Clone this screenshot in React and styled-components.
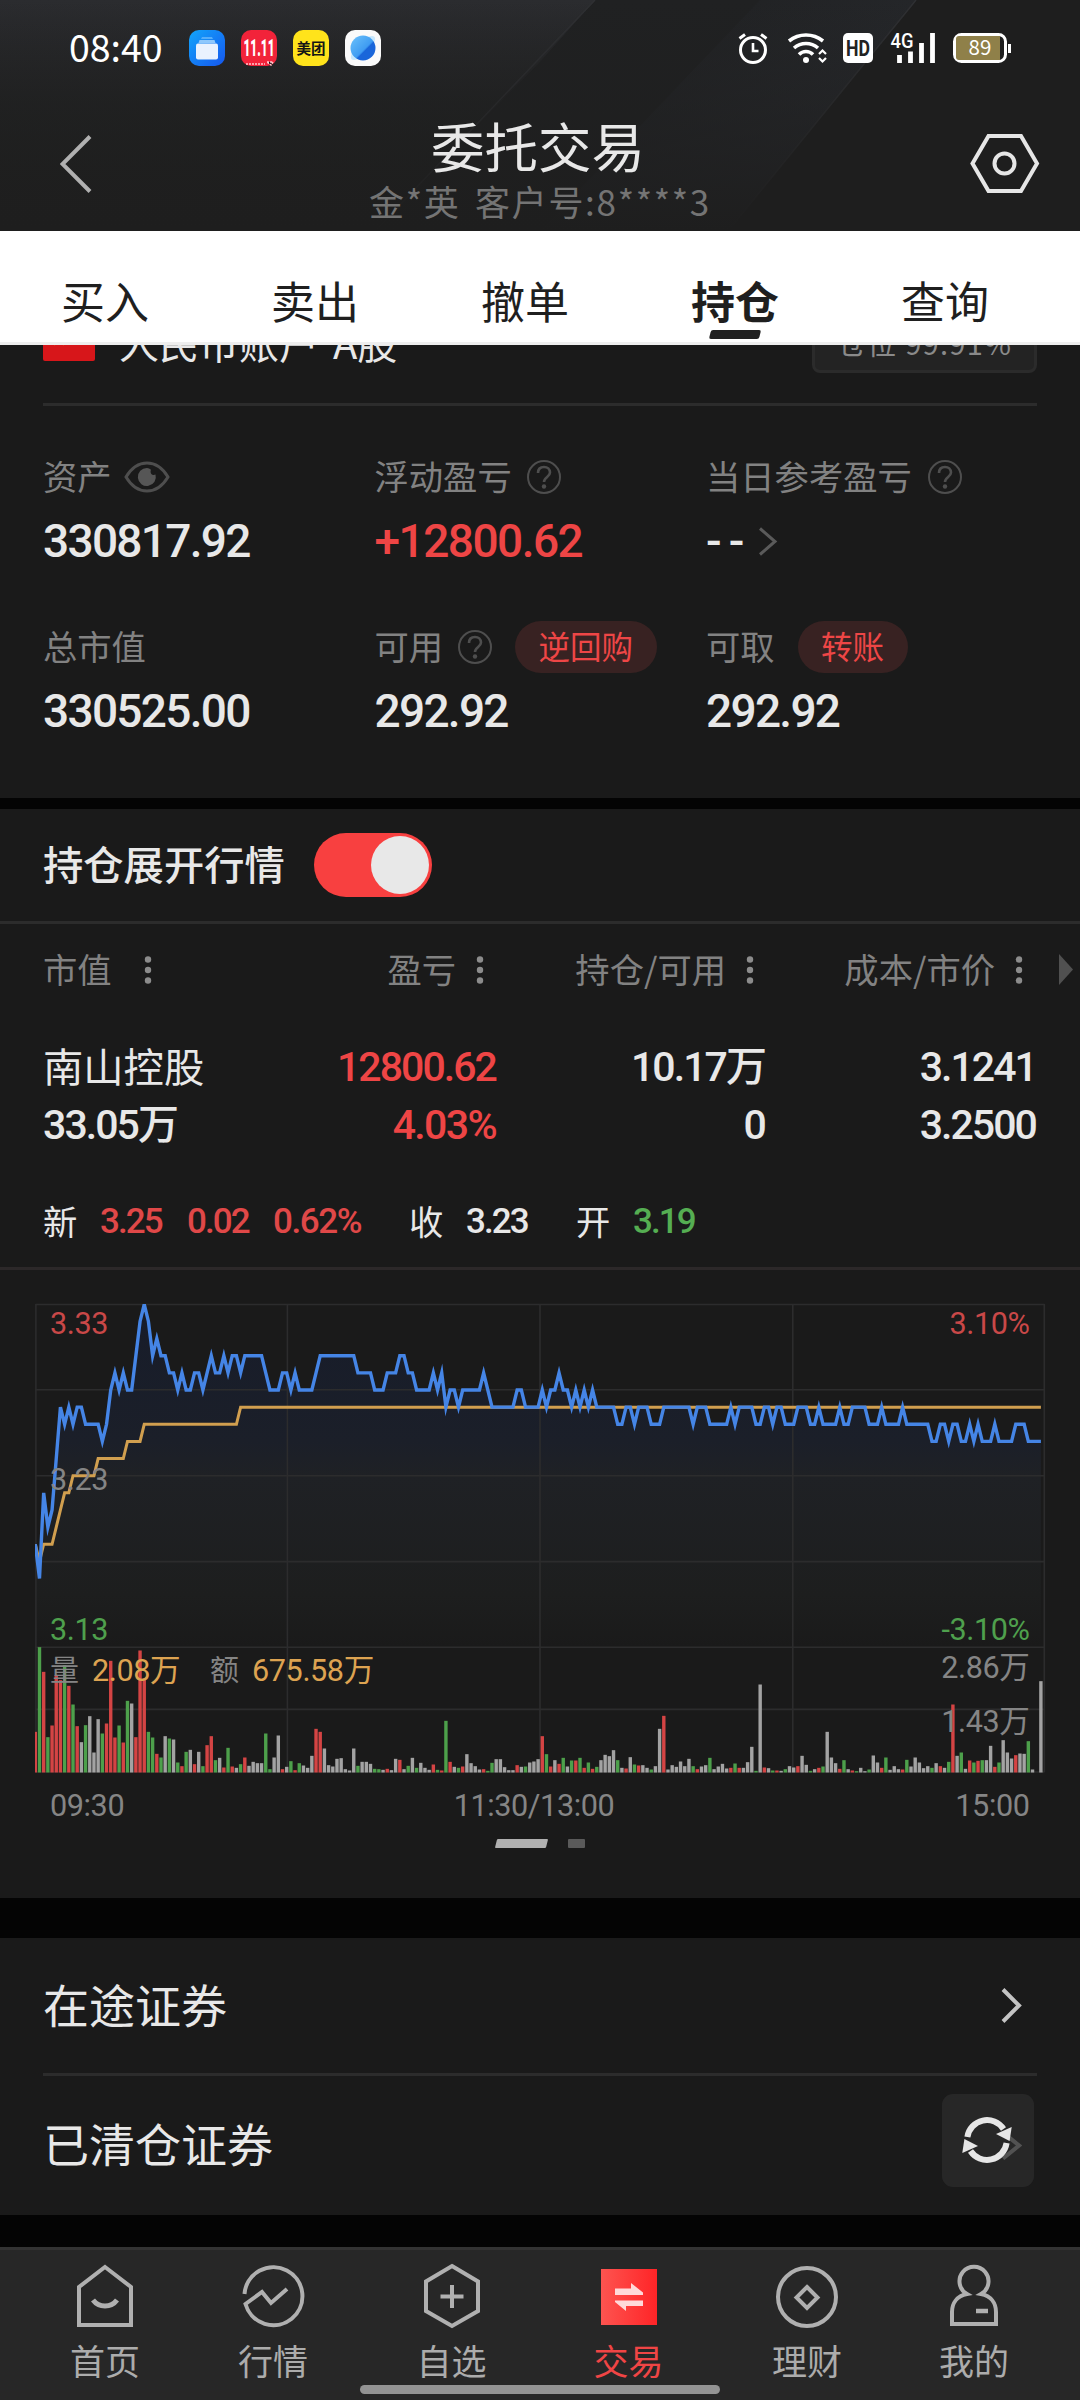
import React from 'react'
import styled, { createGlobalStyle } from 'styled-components'

const GlobalStyle = createGlobalStyle`
* {
box-sizing: border-box;
}
body {
margin: 0;
background: #040404;
color: #e8e8e8;
font-family: "Noto Sans CJK SC", "Noto Sans", sans-serif;
}
svg {
display: block;
flex: none;
}
`
const Page = styled.div`
width: 1080px;
height: 2400px;
overflow: hidden;
display: flex;
flex-direction: column;
background: #040404;
`

/* ---- header ---- */
const Header = styled.header`
position: relative;
height: 231px;
flex: none;
background: linear-gradient(180deg, #2b2c2f 0%, #222324 45%, #1f1f1f 100%);
`
const HeaderArt = styled.svg`
position: absolute;
left: 0;
top: 0;
`
const StatusBar = styled.div`
position: relative;
height: 96px;
padding: 0 69px;
display: flex;
align-items: center;
`
const Clock = styled.span`
width: 120px;
font-size: 37.5px;
line-height: 60px;
margin-top: -5px;
font-weight: 400;
color: #fff;
`
const AppIcons = styled.div`
display: flex;
gap: 16px;
`
const StatusIcons = styled.div`
margin-left: auto;
display: flex;
align-items: center;
`
const TitleBar = styled.div`
position: relative;
height: 135px;
display: flex;
justify-content: space-between;
padding: 0 40px 0 60px;
`
const SideButton = styled.div`
width: 70px;
display: flex;
align-items: center;
`
const TitleBlock = styled.div`
display: flex;
flex-direction: column;
align-items: center;
padding: 19px 20px 0 0;
`
const Title = styled.div`
font-size: 53.5px;
line-height: 60px;
padding-right: 4px;
color: #e8e8e8;
`
const SubTitle = styled.div`
font-size: 35px;
line-height: 40px;
margin-top: 6px;
letter-spacing: 1.7px;
word-spacing: 5px;
color: #747474;
`
const Tabs = styled.nav`
flex: none;
height: 114px;
background: #fff;
border-bottom: 3px solid #eeeeee;
display: grid;
grid-template-columns: repeat(5, 210px);
`
const Tab = styled.div`
display: flex;
flex-direction: column;
align-items: center;
padding-top: 44px;
font-size: 44px;
line-height: 50px;
font-weight: ${p => p.$active ? 600 : 400};
color: #1f1f1f;
&::after {
content: '';
margin-top: 5px;
width: 50px;
height: 9px;
transform: skewX(-14deg);
border-radius: 2px;
background: ${p => p.$active ? '#1f1f1f' : 'transparent'};
}
`

/* ---- account summary ---- */
const Section = styled.section`
flex: none;
overflow: hidden;
background: #1a1a1a;
`
const AccountRow = styled.div`
margin: -31px 43px 0;
height: 92px;
padding-bottom: 31px;
border-bottom: 3px solid #2c2c2c;
display: flex;
align-items: center;
`
const AccountName = styled.span`
font-size: 40px;
line-height: 50px;
word-spacing: 5px;
margin: -3px 0 0 24px;
`
const Badge = styled.span`
margin-left: auto;
width: 225px;
height: 59px;
border: 3px solid #2b2b2b;
border-radius: 8px;
background: #232323;
display: flex;
justify-content: center;
font-size: 29px;
line-height: 50px;
letter-spacing: 1.3px;
color: #8a8a8a;
`
const Summary = styled.div`
height: 392px;
padding: 40px 43px 0;
display: grid;
grid-template-columns: 331.5px 331.5px 1fr;
grid-template-rows: 170px 170px;
`
const Label = styled.div`
height: 62px;
display: flex;
align-items: center;
font-size: 34.3px;
color: #828282;
`
const LabelText = styled.span`
line-height: 40px;
margin: -4px ${p => p.$gap || 0}px 0 0;
`
const Num = styled.span`
font-family: Roboto, "Noto Sans CJK SC", sans-serif;
font-weight: 500;
font-size: ${p => p.$size || 46}px;
letter-spacing: ${p => p.$spacing || '-0.037em'};
line-height: 50px;
color: ${p => p.$color || '#e8e8e8'};
`
const Value = styled.div`
height: 50px;
margin-top: 8px;
display: flex;
align-items: center;
gap: 7px;
`
const Pill = styled.span`
margin-left: 23px;
height: 52px;
padding: 0 23.5px;
border-radius: 26px;
background: #382222;
color: #ee4646;
font-size: 31.5px;
line-height: 48px;
`
const Gap = styled.div`
flex: none;
height: ${p => p.$h}px;
`

/* ---- positions ---- */
const ToggleRow = styled.div`
height: 115px;
padding-left: 43px;
border-bottom: 3px solid #2c2c2c;
display: flex;
align-items: center;
font-size: 40.3px;
font-weight: 500;
`
const ToggleLabel = styled.span`
line-height: 50px;
margin-top: -4px;
width: 271px;
`
const Toggle = styled.div`
width: 118px;
height: 64px;
padding: 3px;
border-radius: 32px;
background: #f84040;
display: flex;
justify-content: flex-end;
`
const Knob = styled.div`
width: 58px;
height: 58px;
border-radius: 50%;
background: #e8e8e8;
`
const HeadRow = styled.div`
height: 90px;
padding-top: 1px;
display: grid;
grid-template-columns: 278px 178px 270px 269px 1fr;
align-items: center;
`
const HeadCell = styled.div`
display: flex;
align-items: center;
justify-content: flex-end;
gap: 20px;
margin-right: -28px;
font-size: 34.3px;
line-height: 40px;
color: #828282;
white-space: nowrap;
&:first-child {
justify-content: flex-start;
padding-left: 43px;
gap: 32px;
}
&:last-child {
margin-right: 7px;
}
`
const HeadText = styled.span`
margin-top: -4px;
`
const StockRow = styled.div`
height: 151px;
padding: 28px 44px 0 43px;
display: grid;
grid-template-columns: 253px 200px 269px 271px;
grid-auto-rows: 58px;
`
const StockName = styled.span`
font-size: 40.3px;
line-height: 52px;
margin-top: -3px;
`
const Cell = styled.span`
text-align: ${p => p.$left ? 'left' : 'right'};
`
const QuoteRow = styled.div`
height: 105px;
padding: 11px 0 0 43px;
border-bottom: 3px solid #2c2829;
display: flex;
align-items: center;
`
const QuoteLabel = styled.span`
width: 57px;
font-size: 34.3px;
line-height: 40px;
margin-top: -3px;
`
const QuoteItem = styled.span`
width: ${p => p.$w}px;
`
const ChartArea = styled.div`
height: 569px;
padding-top: 10px;
`
const Pager = styled.div`
display: flex;
gap: 21px;
padding-left: 496px;
`
const PagerBar = styled.span`
width: ${p => p.$on ? 51 : 17}px;
height: 9px;
border-radius: 1px;
background: ${p => p.$on ? '#b0b0b0' : '#5a5a5a'};
transform: ${p => p.$on ? 'skewX(-14deg)' : 'none'};
`

/* ---- bottom lists ---- */
const ListRow = styled.div`
position: relative;
height: ${p => p.$h}px;
margin: 0 43px;
padding-right: 15px;
border-bottom: ${p => p.$line ? '3px solid #2c2c2c' : 'none'};
display: flex;
align-items: center;
justify-content: space-between;
font-size: 46px;
`
const ListText = styled.span`
line-height: 60px;
margin-top: ${p => p.$up || -6}px;
`
const RefreshButton = styled.div`
position: absolute;
right: 3px;
top: 18px;
width: 92px;
height: 93px;
border-radius: 11px;
background: rgba(44, 44, 44, 0.72);
`
const BottomNav = styled.nav`
flex: none;
height: 153px;
padding: 0 36px 0 20px;
border-top: 3px solid #333;
background: #272727;
display: grid;
grid-template-columns: 170px 166px 191px 163px 194px 140px;
`
const NavItem = styled.div`
padding-top: 13px;
display: flex;
flex-direction: column;
align-items: center;
font-size: 35px;
line-height: 40px;
color: ${p => p.$active ? '#f04545' : '#acacac'};
`
const NavText = styled.span`
margin-top: 11px;
`
const HomeBar = styled.div`
position: absolute;
left: 360px;
top: 2385px;
width: 360px;
height: 9px;
border-radius: 5px;
background: #939393;
`

const RED = '#ee4545'
const GREEN = '#55ae52'

// price in cents above 3.00, one value per minute, "v*n" repeats a value
const PRICE = '19 17 22 20 21 24 27 26 27 26 27*2 26*4 25 26 28 29 28 29 28*2 30 32 33 32 30 31 30*2 29*2 28 29 28*2 29*2 28 29 30 29*2 30 29 30*2 29 30*5 29 28*3 29*2 28 29 28*4 29 30*9 29*4 28*3 29*3 30*2 29*2 28*4 29 28 29 27 28*2 27 28*5 29 28 27*6 28*2 27*4 28 27 28*2 29 28*2 27 28 27 28 27 28 27*5 26*2 27*2 26 27*3 26*3 27*7 26 27*3 26*5 27 26 27*4 26*2 27*2 26 27*2 26*3 27*3 26*2 27 26*4 27 26*2 27*4 26*3 27 26*4 27 26*6 25*2 26*2 25 26*2 25*2 26 25 26 25*3 26 25*4 26*3 25*4'
const AVERAGE = '19 18 19*3 20 21 22*2 23*6 24*7 25*4 26*23 27*192'

// r = up, g = down, w = flat
const VOLUME = 'r122 g376 r302 g106 r141 r292 r277 g322 r260 g204 r139 w91 g142 w169 w60 w160 g117 r147 r335 r105 g141 r90 g215 w207 r106 r366 r282 g122 g105 r56 g45 w109 g102 w99 g30 r19 g62 w68 r25 w62 g19 r82 r109 g37 w44 r15 g74 r18 w14 g25 r45 w20 w32 w28 w28 g117 g10 w45 w111 r10 w17 g34 r7 g28 w21 w14 w50 r131 r122 w72 w22 w18 w41 w43 w10 w6 w72 g20 w32 w32 w26 g11 g10 w8 r11 w7 w41 r38 w10 g20 w44 g14 w29 w14 w8 r24 g8 r6 g155 r32 w17 g14 r18 w55 w28 w19 w9 r10 g5 g29 w40 w40 w16 w7 w7 r22 w17 g18 w30 w33 w40 r109 g55 r18 w37 r26 g44 w18 g36 r36 g44 r14 g30 r11 g17 w37 w53 w49 w67 g37 w14 r12 w46 g24 r21 w22 w14 g9 w19 w131 r170 w9 w22 w17 w33 w19 w41 g19 r10 w18 w22 g44 w10 w18 w26 w12 r14 g27 r14 w14 w31 w77 g5 w264 r15 w13 g6 r6 w5 g10 w19 w15 r19 w50 w23 g5 w10 r14 g18 w122 w45 w28 r11 g37 w10 r6 g4 w14 w4 g9 w51 w30 r14 g45 w8 w19 w10 r9 g38 w18 w45 w30 w13 w19 g14 w28 r19 w14 g32 r204 w50 g60 w11 r36 g30 r35 g37 w37 w80 r17 g30 w97 w60 w42 r52 w57 w56 g94 w9 w0 w274'

const expand = s => s.split(' ').flatMap(t => {
  const [v, n] = t.split('*')
  return Array(Number(n || 1)).fill(Number(v))
})
const X0 = 35.3
const STEP = 4.19
const px = i => +(X0 + i * STEP).toFixed(2)
const py = v => +(24.3 + (33 - v) * 17.14).toFixed(2)
const toPoints = s => expand(s).map((v, i) => `${px(i)},${py(v)}`).join(' ')
const BAR_COLORS = { r: '#d44444', g: '#4da04b', w: '#a3a3a3' }

const Chart = () => {
  const line = toPoints(PRICE)
  return (
    <svg width="1080" height="559" viewBox="0 0 1080 559" fontFamily='Roboto, "Noto Sans CJK SC", sans-serif' fontSize="30.6" letterSpacing="-0.4">
      <defs>
        <linearGradient id="area" x1="0" y1="24" x2="0" y2="367" gradientUnits="userSpaceOnUse">
          <stop offset="0" stopColor="#171c2a" />
          <stop offset="0.4" stopColor="#1b1f29" />
          <stop offset="0.5" stopColor="#1f2125" />
          <stop offset="0.85" stopColor="#1d1e1e" />
          <stop offset="1" stopColor="#1a1a1a" />
        </linearGradient>
        <clipPath id="plot"><rect x="35" y="24" width="1010" height="470" /></clipPath>
      </defs>
      <polygon points={`${px(0)},367 ${line} ${px(240)},367`} fill="url(#area)" />
      <g stroke="#2c2c2d" strokeWidth="1.6">
        {[24.5, 109.8, 195.8, 281.6, 367.2, 429.4, 492].map(y => <path key={y} d={`M35.5 ${y}H1044.5`} />)}
        {[35.9, 287.4, 540, 792.8, 1044.3].map(x => <path key={x} d={`M${x} 24V492`} />)}
      </g>
      <g clipPath="url(#plot)" fill="none">
        {VOLUME.split(' ').map((b, i) => {
          const h = Number(b.slice(1)) / 3
          return <rect key={i} x={px(i) - 1.7} y={492.5 - h} width="3.4" height={h} fill={BAR_COLORS[b[0]]} />
        })}
        <polyline points={toPoints(AVERAGE)} stroke="#d19f4f" strokeWidth="3" />
        <polyline points={line} stroke="#4585e6" strokeWidth="3.4" strokeMiterlimit="6" />
      </g>
      <text x="50" y="53.5" fill="#c94848">3.33</text>
      <text x="50" y="209.5" fill="#858585">3.23</text>
      <text x="50" y="360" fill="#4fa04d">3.13</text>
      <g textAnchor="end">
        <text x="1029.5" y="53.5" fill="#c94848">3.10%</text>
        <text x="1029.5" y="360" fill="#4fa04d">-3.10%</text>
        <text x="1029.5" y="398" fill="#858585">2.86万</text>
        <text x="1029.5" y="451.5" fill="#858585">1.43万</text>
        <text x="1029.5" y="535.5" fill="#858585">15:00</text>
      </g>
      <text x="50" y="400.5" fill="#858585" fontSize="29">量</text>
      <text x="92" y="400.5" fill="#dda351">2.08万</text>
      <text x="210" y="400.5" fill="#858585" fontSize="29">额</text>
      <text x="252" y="400.5" fill="#dda351">675.58万</text>
      <text x="50" y="535.5" fill="#858585">09:30</text>
      <text x="534" y="535.5" fill="#858585" textAnchor="middle">11:30/13:00</text>
    </svg>
  )
}

const Question = () => (
  <svg width="34" height="34" viewBox="0 0 34 34" fill="none" stroke="#4e4e4e" strokeWidth="2">
    <circle cx="17" cy="17" r="16" />
    <path d="M11 13c0-4 2.6-6 6-6s6 2.200 6 5.600c0 4.400-6 4.400-6 9.400" strokeWidth="2.600" />
    <circle cx="17" cy="26.500" r="2.200" fill="#4e4e4e" stroke="none" />
  </svg>
)
const Eye = () => (
  <svg width="46" height="32" viewBox="0 0 46 32">
    <path d="M2 16C8 6 15 2 23 2s15 4 21 14c-6 10-13 14-21 14S8 26 2 16z" fill="none" stroke="#4e4e4e" strokeWidth="3" />
    <path d="M23 7a9 9 0 1 0 8.500 6.500c-3 1.500-6-1-4.500-4.800A9 9 0 0 0 23 7z" fill="#565656" />
  </svg>
)
const Dots = () => (
  <svg width="8" height="30" viewBox="0 0 8 30" fill="#8c8c8c">
    <circle cx="4" cy="4.500" r="3.200" />
    <circle cx="4" cy="15" r="3.200" />
    <circle cx="4" cy="25.500" r="3.200" />
  </svg>
)
const Chevron = ({ w, h, color, stroke }) => (
  <svg width={w} height={h} fill="none" stroke={color} strokeWidth={stroke}>
    <path d={`M2 1.500L${w - 3} ${h / 2}L2 ${h - 1.5}`} />
  </svg>
)

const navIcons = {
  首页: (
    <g>
      <path d="M32 4L58 24V62H6V24z" />
      <path d="M20 37c6 8 18 8 24 0" strokeWidth="5" />
    </g>
  ),
  行情: (
    <g>
      <path d="M3.500 31A29 29 0 1 1 4.500 41L21 29l9 11L46 26" />
    </g>
  ),
  自选: (
    <g>
      <path d="M32 3L58 18.500V48L32 63 6 48V18.500z" />
      <path d="M32 22v23M20.500 33.500h23" />
    </g>
  ),
  交易: (
    <g stroke="none">
      <rect x="4" y="6" width="56" height="56" fill="url(#trade)" />
      <path d="M18 25.500h16v-5.500l12 9.500v2.500H18zM46 37.500H18v1.500l11 9v-5h17z" fill="#ffd9d9" />
    </g>
  ),
  理财: (
    <g>
      <circle cx="32" cy="34" r="29" />
      <path d="M32 24l10.500 10.500L32 45 21.500 34.500z" />
    </g>
  ),
  我的: (
    <g>
      <path d="M25 31a14.500 14.500 0 1 1 14 0C49 33 54 40 54 49v12H10V49c0-9 5-16 15-18z" />
      <path d="M34 48h12" strokeWidth="4.500" />
    </g>
  ),
}
const NavIcon = ({ name }) => (
  <svg width="64" height="66" viewBox="0 0 64 66" fill="none" stroke="#b0b0b0" strokeWidth="4">
    <defs>
      <linearGradient id="trade"><stop offset="0" stopColor="#fd5450" /><stop offset="1" stopColor="#ff2427" /></linearGradient>
    </defs>
    {navIcons[name]}
  </svg>
)

const AppBadges = () => (
  <AppIcons>
    <svg width="36" height="36" viewBox="0 0 36 36">
      <defs>
        <linearGradient id="files" x1="0" y1="0" x2="1" y2="1"><stop offset="0" stopColor="#12a5fb" /><stop offset="1" stopColor="#1657ee" /></linearGradient>
      </defs>
      <rect width="36" height="36" rx="10" fill="url(#files)" />
      <path d="M13 7h10l1 2H12z" fill="#55aefa" />
      <path d="M10.500 10h15l1 3h-17z" fill="#8fc8fc" />
      <rect x="7" y="13.500" width="22" height="16" rx="2" fill="#eaf2fe" />
    </svg>
    <svg width="36" height="36" viewBox="0 0 36 36">
      <rect width="36" height="36" rx="10" fill="#f2233a" />
      <text x="18" y="26" textAnchor="middle" fontFamily="Roboto, sans-serif" fontWeight="900" fontSize="23" textLength="31" lengthAdjust="spacingAndGlyphs" fill="#fff">11.11</text>
      <path d="M5 34h19M26 32l6 0-2 3z" stroke="#ffc9cf" strokeWidth="1.500" strokeDasharray="2 1" />
    </svg>
    <svg width="36" height="36" viewBox="0 0 36 36">
      <rect width="36" height="36" rx="10" fill="#ffe31b" />
      <text x="18" y="23.500" textAnchor="middle" fontWeight="700" fontSize="14.500" fill="#151515">美团</text>
    </svg>
    <svg width="36" height="36" viewBox="0 0 36 36">
      <defs>
        <linearGradient id="planet" x1="0" y1="0" x2="1" y2="1"><stop offset="0" stopColor="#6cc2fb" /><stop offset="0.55" stopColor="#3f9cf2" /><stop offset="0.6" stopColor="#1a66da" /><stop offset="1" stopColor="#1a66da" /></linearGradient>
      </defs>
      <rect width="36" height="36" rx="10" fill="#fafafa" />
      <ellipse cx="18" cy="18" rx="16" ry="6" transform="rotate(-45 18 18)" fill="#c8e8fd" />
      <circle cx="18" cy="18" r="12.500" fill="url(#planet)" />
    </svg>
  </AppIcons>
)

const PhoneStatus = () => (
  <StatusIcons>
    <svg width="275" height="34" viewBox="736 31 275 34" fill="none" stroke="#fff">
      <circle cx="753" cy="50" r="12.500" strokeWidth="3" />
      <path d="M753 43v8h5.500" strokeWidth="2.600" />
      <path d="M739.500 38.500l5.500-4M766.500 38.500l-5.500-4" strokeWidth="3" />
      <path d="M789 41c10-8 24-8 34 0" strokeWidth="3.600" />
      <path d="M794 48c7-6 17-6 24 0" strokeWidth="3.600" />
      <path d="M799 54.500c4-4 10-4 14 0" strokeWidth="3.600" />
      <circle cx="806" cy="60" r="3" fill="#fff" stroke="none" />
      <path d="M819 54l3.500-3.500 3.500 3.500M819 58l3.500 3.500 3.500-3.500" strokeWidth="2.200" />
      <rect x="843" y="33" width="30" height="30" rx="5" fill="#fff" stroke="none" />
      <text x="858" y="56" textAnchor="middle" fontFamily="Roboto, sans-serif" fontWeight="700" fontSize="22" textLength="24" lengthAdjust="spacingAndGlyphs" fill="#222" stroke="none">HD</text>
      <text x="890.500" y="47.500" fontFamily="Roboto, sans-serif" fontWeight="500" fontSize="19.500" textLength="23" lengthAdjust="spacingAndGlyphs" fill="#fff" stroke="none">4G</text>
      <path d="M899.500 55v8M910.500 51.500v11.500M921.500 43v20M932.500 33v30" strokeWidth="4.800" />
      <rect x="954.500" y="34.500" width="51" height="27" rx="7" strokeWidth="3" />
      <path d="M959 36h41v24h-41a3 3 0 0 1-3-3V39a3 3 0 0 1 3-3z" fill="#8f8049" stroke="none" />
      <path d="M1009.500 44v9" strokeWidth="3" />
      <text x="980" y="55" textAnchor="middle" fontSize="20.500" fill="#fff" stroke="none">89</text>
    </svg>
  </StatusIcons>
)

const tabs = ['买入', '卖出', '撤单', '持仓', '查询']

const App = () => {
  return (
    <Page>
      <GlobalStyle />
      <Header>
        <HeaderArt width="1080" height="231">
          <defs>
            <linearGradient id="beam" x1="0.2" y1="0" x2="0.75" y2="0.6"><stop offset="0" stopColor="#1f2021" /><stop offset="1" stopColor="#27292d" /></linearGradient>
            <linearGradient id="fade" x1="0" y1="0" x2="0" y2="1"><stop offset="0" stopColor="#1e1e1e" stopOpacity="0" /><stop offset="1" stopColor="#1e1e1e" /></linearGradient>
          </defs>
          <path d="M595 0H1080V231H375L540 62z" fill="#202122" />
          <path d="M760 0H916L728 231H540z" fill="url(#beam)" />
          <path d="M916 0H1080V231H728z" fill="#1e1e1e" />
          <path d="M916 0L728 231M595 0L375 231" stroke="#2f3033" strokeWidth="1.500" />
          <rect width="1080" height="231" fill="url(#fade)" />
        </HeaderArt>
        <StatusBar>
          <Clock>08:40</Clock>
          <AppBadges />
          <PhoneStatus />
        </StatusBar>
        <TitleBar>
          <SideButton>
            <svg width="34" height="58" fill="none" stroke="#b0b0b0" strokeWidth="4"><path d="M30 1.500L2.500 29 30 56.500" /></svg>
          </SideButton>
          <TitleBlock>
            <Title>委托交易</Title>
            <SubTitle>金*英 客户号:8****3</SubTitle>
          </TitleBlock>
          <SideButton>
            <svg width="70" height="60" fill="none" stroke="#e6e6e6" strokeWidth="4">
              <path d="M2.500 29.500L18.500 2H51L67 29.500 51 57H18.500z" />
              <circle cx="34.500" cy="29.500" r="10" />
            </svg>
          </SideButton>
        </TitleBar>
      </Header>
      <Tabs>
        {tabs.map(t => <Tab key={t} $active={t === '持仓'}>{t}</Tab>)}
      </Tabs>

      <Section>
        <AccountRow>
          <svg width="52" height="35" viewBox="0 0 52 35">
            <rect width="52" height="35" rx="2" fill="#d7161a" />
            <path d="M16 6l2 5h5l-4 3.500 1.500 5L16 16.500l-4.500 3 1.500-5L9 11h5z" fill="#f6c416" />
          </svg>
          <AccountName>人民币账户 A股</AccountName>
          <Badge>仓位 99.91%</Badge>
        </AccountRow>
        <Summary>
          <div>
            <Label><LabelText $gap={12}>资产</LabelText><Eye /></Label>
            <Value><Num>330817.92</Num></Value>
          </div>
          <div>
            <Label><LabelText $gap={15}>浮动盈亏</LabelText><Question /></Label>
            <Value><Num $color={RED} $spacing="-0.033em">+12800.62</Num></Value>
          </div>
          <div>
            <Label><LabelText $gap={16}>当日参考盈亏</LabelText><Question /></Label>
            <Value><Num $spacing="7px">--</Num><Chevron w={20} h={29} color="#5a5a5a" stroke={3} /></Value>
          </div>
          <div>
            <Label><LabelText>总市值</LabelText></Label>
            <Value><Num>330525.00</Num></Value>
          </div>
          <div>
            <Label><LabelText $gap={15}>可用</LabelText><Question /><Pill>逆回购</Pill></Label>
            <Value><Num>292.92</Num></Value>
          </div>
          <div>
            <Label><LabelText>可取</LabelText><Pill>转账</Pill></Label>
            <Value><Num>292.92</Num></Value>
          </div>
        </Summary>
      </Section>
      <Gap $h={11} />

      <Section>
        <ToggleRow>
          <ToggleLabel>持仓展开行情</ToggleLabel>
          <Toggle><Knob /></Toggle>
        </ToggleRow>
        <HeadRow>
          <HeadCell><HeadText>市值</HeadText><Dots /></HeadCell>
          <HeadCell><HeadText>盈亏</HeadText><Dots /></HeadCell>
          <HeadCell><HeadText>持仓/可用</HeadText><Dots /></HeadCell>
          <HeadCell><HeadText>成本/市价</HeadText><Dots /></HeadCell>
          <HeadCell><svg width="14" height="31"><path d="M0 0l14 15.500L0 31z" fill="#505050" /></svg></HeadCell>
        </HeadRow>
        <StockRow>
          <StockName>南山控股</StockName>
          <Cell><Num $size={41} $spacing="-0.047em" $color={RED}>12800.62</Num></Cell>
          <Cell><Num $size={41} $spacing="-0.047em">10.17万</Num></Cell>
          <Cell><Num $size={41} $spacing="-0.047em">3.1241</Num></Cell>
          <Cell $left><Num $size={41} $spacing="-0.047em">33.05万</Num></Cell>
          <Cell><Num $size={41} $spacing="-0.04em" $color={RED}>4.03%</Num></Cell>
          <Cell><Num $size={41} $spacing="-0.047em">0</Num></Cell>
          <Cell><Num $size={41} $spacing="-0.047em">3.2500</Num></Cell>
        </StockRow>
        <QuoteRow>
          <QuoteLabel>新</QuoteLabel>
          <QuoteItem $w={87}><Num $size={35} $spacing="-0.055em" $color="#e04848">3.25</Num></QuoteItem>
          <QuoteItem $w={86}><Num $size={35} $spacing="-0.055em" $color="#e04848">0.02</Num></QuoteItem>
          <QuoteItem $w={136}><Num $size={35} $spacing="-0.04em" $color="#e04848">0.62%</Num></QuoteItem>
          <QuoteLabel>收</QuoteLabel>
          <QuoteItem $w={110}><Num $size={35} $spacing="-0.055em">3.23</Num></QuoteItem>
          <QuoteLabel>开</QuoteLabel>
          <QuoteItem $w={80}><Num $size={35} $spacing="-0.055em" $color={GREEN}>3.19</Num></QuoteItem>
        </QuoteRow>
        <ChartArea>
          <Chart />
        </ChartArea>
        <Pager><PagerBar $on /><PagerBar /></Pager>
        <Gap $h={50} />
      </Section>
      <Gap $h={40} />

      <Section>
        <ListRow $h={138} $line>
          <ListText>在途证券</ListText>
          <Chevron w={21} h={35} color="#c4c4c4" stroke={4} />
        </ListRow>
        <ListRow $h={139}>
          <ListText $up={-8}>已清仓证券</ListText>
          <Chevron w={21} h={29} color="#b5b5b5" stroke={4} />
          <RefreshButton>
            <svg width="92" height="93" viewBox="-45 -46 92 93">
              <g id="half" fill="#e6e6e6">
                <path d="M-19.600 -3A19.800 19.800 0 0 1 16.500 -11" fill="none" stroke="#e6e6e6" strokeWidth="6" />
                <path d="M24.700 -13L9 -6l13.600 7z" />
              </g>
              <use href="#half" transform="rotate(180)" />
            </svg>
          </RefreshButton>
        </ListRow>
      </Section>
      <Gap $h={32} />

      <BottomNav>
        {Object.keys(navIcons).map(name => (
          <NavItem key={name} $active={name === '交易'}>
            <NavIcon name={name} />
            <NavText>{name}</NavText>
          </NavItem>
        ))}
      </BottomNav>
      <HomeBar />
    </Page>
  )
}
export default App
